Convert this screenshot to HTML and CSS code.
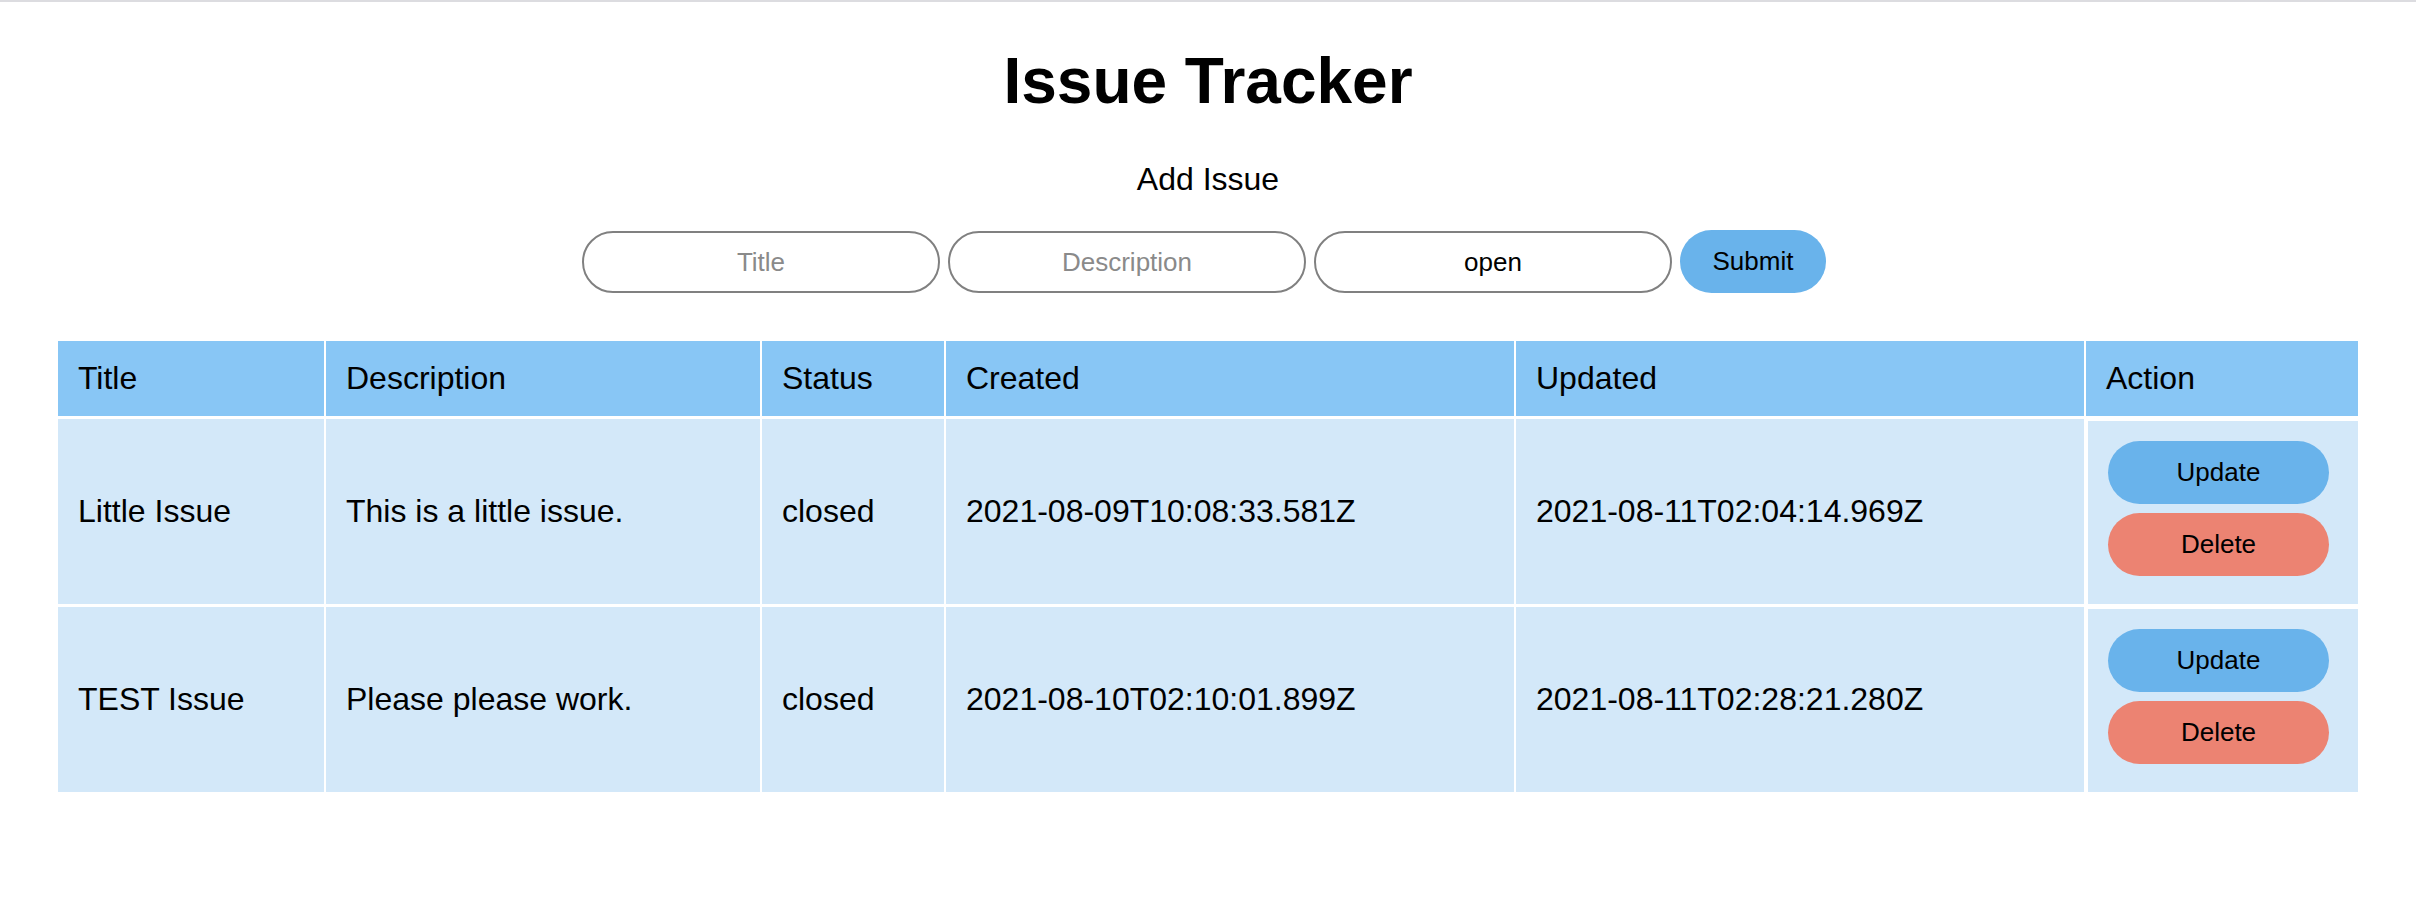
FILE: index.html
```html
<!DOCTYPE html>
<html lang="en">
<head>
<meta charset="utf-8">
<title>Issue Tracker</title>
<link rel="stylesheet" href="styles.css">
</head>
<body>
<div class="topline"></div>
<main class="app">
  <h1 class="app-title">Issue Tracker</h1>
  <h2 class="add-title">Add Issue</h2>
  <form class="add-form">
    <input class="field" type="text" placeholder="Title">
    <input class="field" type="text" placeholder="Description">
    <input class="field" type="text" value="open">
    <button class="btn btn-submit" type="button">Submit</button>
  </form>
  <table class="issues">
    <thead>
      <tr>
        <th class="c-title">Title</th>
        <th class="c-desc">Description</th>
        <th class="c-status">Status</th>
        <th class="c-created">Created</th>
        <th class="c-updated">Updated</th>
        <th class="c-action">Action</th>
      </tr>
    </thead>
    <tbody>
      <tr>
        <td>Little Issue</td>
        <td>This is a little issue.</td>
        <td>closed</td>
        <td>2021-08-09T10:08:33.581Z</td>
        <td>2021-08-11T02:04:14.969Z</td>
        <td class="action-cell">
          <div class="actions">
            <button class="btn btn-update" type="button">Update</button>
            <button class="btn btn-delete" type="button">Delete</button>
          </div>
        </td>
      </tr>
      <tr>
        <td>TEST Issue</td>
        <td>Please please work.</td>
        <td>closed</td>
        <td>2021-08-10T02:10:01.899Z</td>
        <td>2021-08-11T02:28:21.280Z</td>
        <td class="action-cell">
          <div class="actions">
            <button class="btn btn-update" type="button">Update</button>
            <button class="btn btn-delete" type="button">Delete</button>
          </div>
        </td>
      </tr>
    </tbody>
  </table>
</main>
</body>
</html>
```
FILE: styles.css
```css
html, body {
  margin: 0;
  padding: 0;
  background: #ffffff;
}
body {
  font-family: "Liberation Sans", Arial, Helvetica, sans-serif;
  color: #000;
}
.topline {
  height: 2px;
  background: #dcdce0;
}
.app {
  display: flex;
  flex-direction: column;
  align-items: center;
  padding-top: 44px;
}
.app-title {
  margin: 0;
  font-size: 64px;
  font-weight: bold;
  line-height: 71px;
}
.add-title {
  margin: 44px 0 0;
  font-size: 32px;
  font-weight: normal;
  line-height: 37px;
}
.add-form {
  display: flex;
  align-items: flex-start;
  gap: 8px;
  margin-top: 32px;
  padding-right: 8px;
}
.field {
  box-sizing: border-box;
  width: 358px;
  height: 62px;
  margin-top: 1px;
  border: 2px solid #808080;
  border-radius: 31px;
  background: #fff;
  font-family: "Liberation Sans", Arial, sans-serif;
  font-size: 26px;
  color: #000;
  text-align: center;
  outline: none;
  padding: 0 20px;
}
.field::placeholder {
  color: #8a8a8a;
}
.btn {
  box-sizing: border-box;
  border: none;
  border-radius: 32px;
  height: 63px;
  font-family: "Liberation Sans", Arial, sans-serif;
  font-size: 26px;
  color: #000;
  padding: 0;
  cursor: pointer;
}
.btn-submit {
  width: 146px;
  background: #69b3eb;
}
.btn-update {
  width: 221px;
  background: #69b3eb;
}
.btn-delete {
  width: 221px;
  background: #ec8372;
}
.issues {
  margin-top: 45px;
  width: 2304px;
  table-layout: fixed;
  border-collapse: separate;
  border-spacing: 2px 3px;
  font-size: 32px;
}
.issues th,
.issues td {
  box-sizing: border-box;
  text-align: left;
  padding: 0 20px;
  vertical-align: middle;
  font-weight: normal;
  line-height: 37px;
}
.issues th {
  height: 75px;
  background: #88c6f5;
}
.issues td {
  height: 185px;
  background: #d3e8f9;
}
.c-title { width: 266px; }
.c-desc { width: 434px; }
.c-status { width: 182px; }
.c-created { width: 568px; }
.c-updated { width: 568px; }
.c-action { width: 272px; padding-left: 22px; }
.issues td.action-cell {
  border-top: 2px solid #fff;
  border-left: 2px solid #fff;
  padding: 20px 0 28px 20px;
}
.actions {
  display: flex;
  flex-direction: column;
  gap: 9px;
}
```
